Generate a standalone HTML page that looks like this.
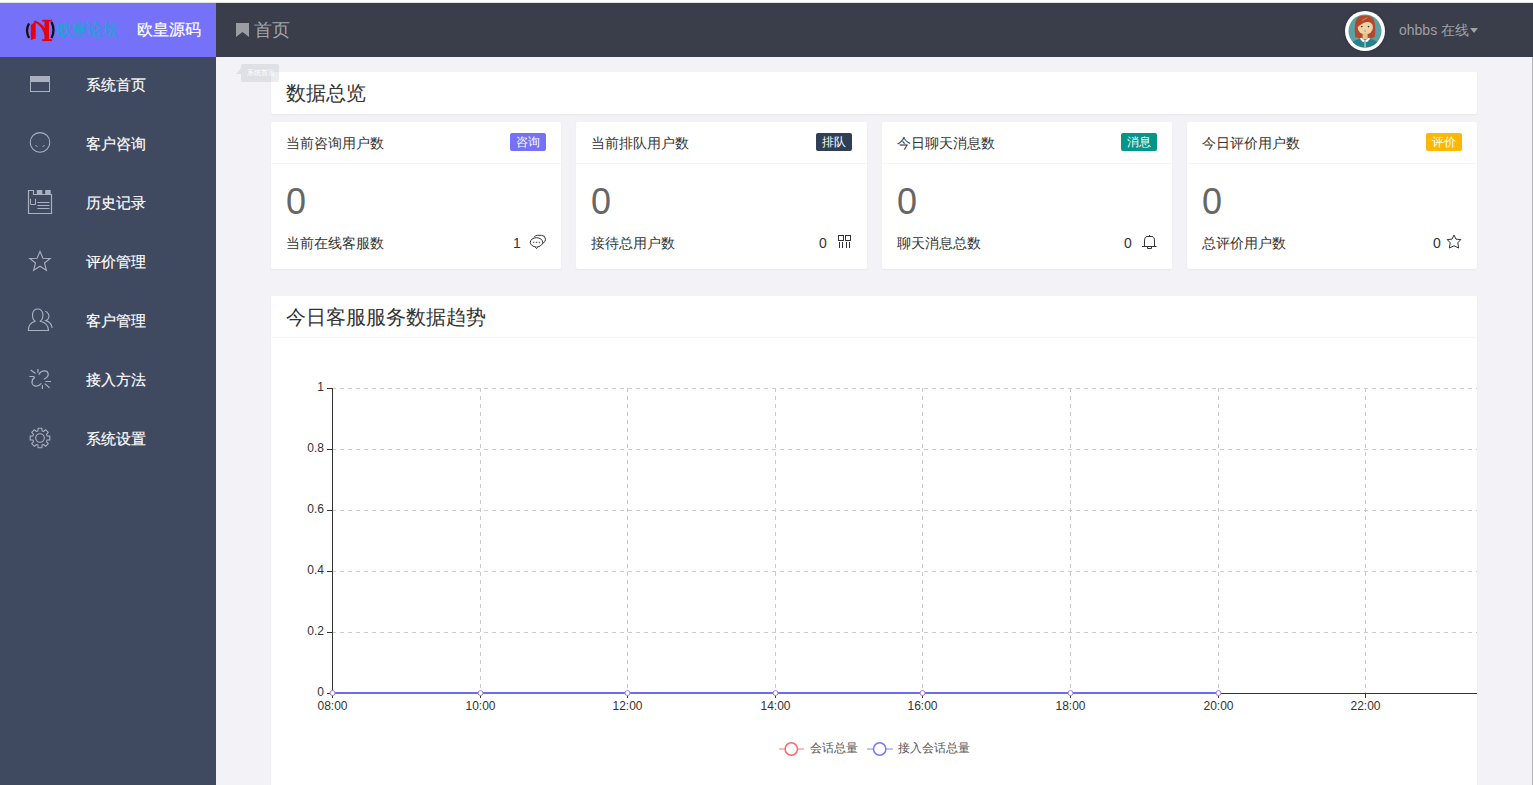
<!DOCTYPE html>
<html><head><meta charset="utf-8">
<style>
*{margin:0;padding:0;box-sizing:border-box}
html,body{width:1533px;height:785px;overflow:hidden;background:#f2f2f7;font-family:"Liberation Sans",sans-serif;color:#333}
.abs{position:absolute}
#topstrip{left:0;top:0;width:1533px;height:3px;background:#fff}
#logo{left:0;top:3px;width:216px;height:54px;background:#7571f9}
#hdr{left:216px;top:3px;width:1317px;height:54px;background:#3a3d4a}
#side{left:0;top:57px;width:216px;height:728px;background:#3f4960}
#rline{left:1532px;top:57px;width:1px;height:728px;background:#b4b4b8}
.logo-t{color:#fff;font-size:16px;line-height:16px;left:137px;top:22px;white-space:nowrap;-webkit-text-stroke:0.2px #fff}
.hd-t{color:#a3a6ab;font-size:18px;line-height:18px;left:254px;top:21px}
.nav{left:86px;color:#fff;font-size:15px;line-height:15px;white-space:nowrap;-webkit-text-stroke:0.15px #fff}
.card{background:#fff;border-radius:2px;box-shadow:0 1px 2px rgba(0,0,0,.05)}
.ch{font-size:14px;line-height:14px;white-space:nowrap}
.badge{height:18px;width:36px;line-height:18px;font-size:12px;color:#fff;text-align:center;border-radius:2px}
.big{font-size:36px;line-height:36px;color:#666}
.sub{font-size:14px;line-height:14px;color:#333;white-space:nowrap}
.sep{height:1px;background:#f6f6f6}
.ic{stroke:#a9b1c0;fill:none}
</style></head><body>
<div id="topstrip" class="abs"></div><div class="abs" style="left:0;top:2px;width:1533px;height:1px;background:#e2e1da"></div>
<div id="logo" class="abs"></div>
<div id="hdr" class="abs"></div>
<div id="side" class="abs"></div>
<div id="rline" class="abs"></div>

<!-- logo -->
<svg class="abs" style="left:24px;top:16px" width="34" height="30" viewBox="0 0 34 30">
 <path d="M5 7.5 Q1 14.5 5 22" stroke="#111" stroke-width="2.3" fill="none"/>
 <path d="M27.5 6 Q31.5 14 27.5 22" stroke="#111" stroke-width="2.3" fill="none"/>
 <path d="M6.8 9 L11.7 5.5 L11.7 22.5 L6.8 24 Z" fill="#e60012"/>
 <path d="M9.5 6 Q17.5 8.5 21 20 L21 12.5 Q17 6.5 11 4.6 Z" fill="#e60012"/>
 <rect x="20.5" y="4" width="4.5" height="21" fill="#e60012"/>
 <rect x="18.2" y="3.8" width="9.8" height="1.8" fill="#e60012"/>
 <rect x="18.2" y="23.2" width="9.8" height="1.9" fill="#e60012"/>
</svg>
<div class="abs" style="left:57px;top:22px;font-size:16px;line-height:16px;color:#2f9bdc;font-weight:bold;white-space:nowrap;transform:scaleX(0.95);transform-origin:0 0">欧皇论坛</div>
<div class="abs logo-t">欧皇源码</div>

<!-- header -->
<svg class="abs" style="left:236px;top:23px" width="13" height="14" viewBox="0 0 13 14"><path d="M0 0H13V14L6.5 9L0 14Z" fill="#9a9ea3"/></svg>
<div class="abs hd-t">首页</div>

<!-- avatar -->
<div class="abs" style="left:1345px;top:11px;width:40px;height:40px;border-radius:50%;background:#fff;box-shadow:0 0 4px rgba(0,0,0,.15)"></div>
<svg class="abs" style="left:1348px;top:14px" width="34" height="34" viewBox="0 0 34 34">
 <defs><clipPath id="cc"><circle cx="17" cy="17" r="16.5"/></clipPath></defs>
 <g clip-path="url(#cc)">
  <rect width="34" height="34" fill="#5ba0a6"/>
  <path d="M7.3 23 C6.3 15 6.5 7 9.5 4 C12.5 0.8 21.5 0.8 24.5 4 C27.5 7 27.7 15 26.8 23 Q22 25 17 24.5 Q12 25 7.3 23 Z" fill="#b5472a"/>
  <ellipse cx="17.3" cy="13.5" rx="7.6" ry="7" fill="#eed3a3"/>
  <path d="M8.8 14 C8.5 7 12.5 3 18 3.2 C22.5 3.4 25.5 6 26 10.5 C24 8.5 21 7.6 18.5 8 C15 8.8 11.5 11 8.8 14 Z" fill="#b5472a"/>
  <path d="M14 6.5 L19.5 3.5" stroke="#e9b9a0" stroke-width="0.6"/>
  <circle cx="13.8" cy="12.6" r="0.8" fill="#3a3030"/>
  <circle cx="20.5" cy="12.6" r="0.8" fill="#3a3030"/>
  <circle cx="17.1" cy="17" r="0.9" fill="#e39486"/>
  <rect x="14.6" y="19" width="5" height="6" fill="#e3c596"/>
  <path d="M1 34 C2 28.5 7 25.5 13.5 24.5 L17 27 L20.5 24.5 C27 25.5 32 28.5 33 34 Z" fill="#2a8289"/>
  <path d="M13 23.5 L17 26.8 L15.2 28.3 L12 25 Z M21 23.5 L17 26.8 L18.8 28.3 L22 25 Z" fill="#fff"/>
  <rect x="16.5" y="27" width="1.1" height="8" fill="#bfe4e6"/>
 </g>
</svg>
<div class="abs" style="left:1399px;top:22px;font-size:14px;line-height:16px;color:#9fa1a6;white-space:nowrap">ohbbs 在线</div>
<svg class="abs" style="left:1470px;top:28px" width="8" height="5" viewBox="0 0 8 5"><path d="M0 0H8L4 5Z" fill="#9fa1a6"/></svg>

<!-- sidebar -->
<svg class="abs" style="left:30px;top:76px" width="20" height="16" viewBox="0 0 20 16"><rect x="0.5" y="0.5" width="19" height="15" stroke="#a9b1c0" fill="none"/><rect x="0" y="0" width="20" height="6" fill="#a9b1c0"/></svg>
<div class="abs nav" style="top:77px">系统首页</div>
<svg class="abs" style="left:29px;top:131px" width="22" height="22" viewBox="0 0 22 22"><circle cx="11" cy="11.4" r="9.8" class="ic" stroke-width="1.1"/><path d="M6.5 14.5 L8.5 15.5 M13.5 15.5 L15.5 14.5" class="ic" stroke-width="1"/></svg>
<div class="abs nav" style="top:136px">客户咨询</div>
<svg class="abs" style="left:27px;top:189px" width="26" height="26" viewBox="0 0 26 26"><path d="M1.5 1.5 H6.5 V5.5 H24.5 V24.5 H1.5 Z" class="ic" stroke-width="1.2"/><rect x="9.8" y="1" width="5.5" height="4.5" fill="#a9b1c0"/><rect x="18.2" y="1" width="5.5" height="4.5" fill="#a9b1c0"/><path d="M3.5 9.8 V15.5 H8.5 V9.8" class="ic"/><path d="M10.4 13.5 H22.5 M10.4 16.5 H22.5 M10.4 19.5 H22.5" class="ic"/></svg>
<div class="abs nav" style="top:195px">历史记录</div>
<svg class="abs" style="left:28px;top:250px" width="24" height="23" viewBox="0 0 24 23"><path d="M12 1.5 L14.9 8.2 L22.2 8.4 L16.5 13 L18.4 20.3 L12 16.2 L5.6 20.3 L7.5 13 L1.8 8.4 L9.1 8.2 Z" class="ic" stroke-width="1.1" stroke-linejoin="miter"/></svg>
<div class="abs nav" style="top:254px">评价管理</div>
<svg class="abs" style="left:27px;top:307px" width="28" height="26" viewBox="0 0 28 26"><path d="M8.3 14.2 C4.2 11.5 4.3 2 10.7 2 C17.1 2 17.2 11.5 13.1 14.2 C18 15.3 21.5 18.5 21.5 23.5 H1.3 C1.3 18.5 4 15.3 8.3 14.2 Z" class="ic" stroke-width="1.15" stroke-linejoin="round"/><path d="M18.2 4.3 C21 5 22.3 8 21.9 10 C21.5 12 20.5 13 18.9 13.6 C22.5 14.8 24.8 17.5 25.1 21" class="ic" stroke-width="1.15"/></svg>
<div class="abs nav" style="top:313px">客户管理</div>
<svg class="abs" style="left:28px;top:368px" width="24" height="23" viewBox="0 0 24 23"><path d="M10.7 6.6 C12.5 3.5 14.5 2.9 16.3 2.9 C18.5 2.9 20.2 4.5 20.2 6.6 C20.2 8.6 18 10.3 15.9 11.3" class="ic" stroke-width="1.25"/><path d="M6.8 9.4 C5 10.5 4 12.5 4 14.3 C4 16.5 6 18.2 8.1 18.2 C10.5 18.2 12 17 13.3 15.4" class="ic" stroke-width="1.25"/><path d="M2.7 2 L7.5 5.6 M9.9 1 V4.8 M1.3 8.5 H6.4 M17.6 13.5 H23 M16.8 15.6 L21.5 19.7 M14.4 17.3 V21" class="ic" stroke-width="1.2"/></svg>
<div class="abs nav" style="top:372px">接入方法</div>
<svg class="abs" style="left:28px;top:426px" width="24" height="24" viewBox="0 0 24 24"><path d="M9.96 4.89L10.09 2.18L13.91 2.18L14.04 4.89L15.59 5.53L17.59 3.71L20.29 6.41L18.47 8.41L19.11 9.96L21.82 10.09L21.82 13.91L19.11 14.04L18.47 15.59L20.29 17.59L17.59 20.29L15.59 18.47L14.04 19.11L13.91 21.82L10.09 21.82L9.96 19.11L8.41 18.47L6.41 20.29L3.71 17.59L5.53 15.59L4.89 14.04L2.18 13.91L2.18 10.09L4.89 9.96L5.53 8.41L3.71 6.41L6.41 3.71L8.41 5.53Z" class="ic" stroke-width="1.1" stroke-linejoin="round"/><circle cx="12" cy="12" r="4.3" class="ic" stroke-width="1.1"/></svg>
<div class="abs nav" style="top:431px">系统设置</div>

<div class="abs card" style="left:271px;top:72px;width:1206px;height:42px"></div>
<div class="abs" style="left:286px;top:83px;font-size:20px;line-height:20px;color:#333;white-space:nowrap">数据总览</div>
<div class="abs card" style="left:271px;top:122px;width:290px;height:147px"></div>
<div class="abs ch" style="left:286px;top:136px">当前咨询用户数</div>
<div class="abs badge" style="left:510px;top:133px;background:#7571f9">咨询</div>
<div class="abs sep" style="left:271px;top:163px;width:290px"></div>
<div class="abs big" style="left:286px;top:184px">0</div>
<div class="abs sub" style="left:286px;top:236px">当前在线客服数</div>
<div class="abs sub" style="left:513px;top:236px">1</div>
<svg class="abs" style="left:529px;top:234px" width="17" height="16" viewBox="0 0 17 16"><path d="M5 3.3 Q6.2 1.3 8.5 1.3 H12.5 Q16.5 1.3 16.5 5.3 Q16.5 7.8 14 9.2" stroke="#333" fill="none"/><ellipse cx="7.5" cy="8.3" rx="6.2" ry="4.6" stroke="#333" fill="#fff"/><path d="M6 12.6 L7.5 14.6 L9 12.6" stroke="#333" fill="#fff"/><path d="M4 8.3H5.3M6.9 8.3H8.2M9.8 8.3H11.1" stroke="#333" stroke-width="1.1"/></svg>
<div class="abs card" style="left:576px;top:122px;width:291px;height:147px"></div>
<div class="abs ch" style="left:591px;top:136px">当前排队用户数</div>
<div class="abs badge" style="left:816px;top:133px;background:#2f4056">排队</div>
<div class="abs sep" style="left:576px;top:163px;width:291px"></div>
<div class="abs big" style="left:591px;top:184px">0</div>
<div class="abs sub" style="left:591px;top:236px">接待总用户数</div>
<div class="abs sub" style="left:819px;top:236px">0</div>
<svg class="abs" style="left:838px;top:235px" width="14" height="14" viewBox="0 0 14 14"><rect x="0.5" y="0.5" width="5" height="5" stroke="#333" fill="none"/><rect x="7.5" y="0.5" width="5" height="5" stroke="#333" fill="none"/><path d="M1.5 7V13M4.5 7V13M8.5 7V13M11.5 7V13" stroke="#333"/></svg>
<div class="abs card" style="left:882px;top:122px;width:290px;height:147px"></div>
<div class="abs ch" style="left:897px;top:136px">今日聊天消息数</div>
<div class="abs badge" style="left:1121px;top:133px;background:#009688">消息</div>
<div class="abs sep" style="left:882px;top:163px;width:290px"></div>
<div class="abs big" style="left:897px;top:184px">0</div>
<div class="abs sub" style="left:897px;top:236px">聊天消息总数</div>
<div class="abs sub" style="left:1124px;top:236px">0</div>
<svg class="abs" style="left:1142px;top:235px" width="15" height="15" viewBox="0 0 15 15"><path d="M2.5 11.5 V6 C2.5 3.2 3.5 1.5 5 1.5 H10 C11.5 1.5 12.5 3.2 12.5 6 V11.5" stroke="#333" fill="none"/><path d="M0 11.5H14.5" stroke="#333"/><path d="M5.5 12 V13.5 H9.5 V12" stroke="#333" fill="none"/><path d="M7.5 0V1.5" stroke="#333"/></svg>
<div class="abs card" style="left:1187px;top:122px;width:290px;height:147px"></div>
<div class="abs ch" style="left:1202px;top:136px">今日评价用户数</div>
<div class="abs badge" style="left:1426px;top:133px;background:#ffb800">评价</div>
<div class="abs sep" style="left:1187px;top:163px;width:290px"></div>
<div class="abs big" style="left:1202px;top:184px">0</div>
<div class="abs sub" style="left:1202px;top:236px">总评价用户数</div>
<div class="abs sub" style="left:1433px;top:236px">0</div>
<svg class="abs" style="left:1446px;top:234px" width="16" height="15" viewBox="0 0 16 15"><path d="M8 1 L10 5.2 L14.8 5.5 L11.8 8.8 L12.6 14 L8 11.8 L3.4 14 L4.2 8.8 L1.2 5.5 L6 5.2 Z" stroke="#333" fill="none" stroke-linejoin="round"/></svg>
<div class="abs card" style="left:271px;top:296px;width:1206px;height:500px"></div>
<div class="abs" style="left:286px;top:307px;font-size:20px;line-height:20px;color:#333;white-space:nowrap">今日客服服务数据趋势</div>
<div class="abs sep" style="left:271px;top:337px;width:1206px"></div>
<svg class="abs" style="left:271px;top:338px" width="1206" height="447" viewBox="0 0 1206 447">
<line x1="61" y1="294.5" x2="1206" y2="294.5" stroke="#ccc" stroke-dasharray="4 4"/>
<line x1="61" y1="233.5" x2="1206" y2="233.5" stroke="#ccc" stroke-dasharray="4 4"/>
<line x1="61" y1="172.5" x2="1206" y2="172.5" stroke="#ccc" stroke-dasharray="4 4"/>
<line x1="61" y1="111.5" x2="1206" y2="111.5" stroke="#ccc" stroke-dasharray="4 4"/>
<line x1="61" y1="50.5" x2="1206" y2="50.5" stroke="#ccc" stroke-dasharray="4 4"/>
<line x1="209.5" y1="50" x2="209.5" y2="355" stroke="#ccc" stroke-dasharray="4 4"/>
<line x1="356.5" y1="50" x2="356.5" y2="355" stroke="#ccc" stroke-dasharray="4 4"/>
<line x1="504.5" y1="50" x2="504.5" y2="355" stroke="#ccc" stroke-dasharray="4 4"/>
<line x1="651.5" y1="50" x2="651.5" y2="355" stroke="#ccc" stroke-dasharray="4 4"/>
<line x1="799.5" y1="50" x2="799.5" y2="355" stroke="#ccc" stroke-dasharray="4 4"/>
<line x1="947.5" y1="50" x2="947.5" y2="355" stroke="#ccc" stroke-dasharray="4 4"/>
<line x1="1094.5" y1="50" x2="1094.5" y2="355" stroke="#ccc" stroke-dasharray="4 4"/>
<line x1="61.5" y1="50" x2="61.5" y2="360" stroke="#333"/>
<line x1="61" y1="355.5" x2="1206" y2="355.5" stroke="#333"/>
<line x1="56" y1="355.5" x2="61" y2="355.5" stroke="#333"/>
<text x="53" y="357.5" font-size="12" text-anchor="end" fill="#333" font-family="Liberation Sans">0</text>
<line x1="56" y1="294.5" x2="61" y2="294.5" stroke="#333"/>
<text x="53" y="296.5" font-size="12" text-anchor="end" fill="#333" font-family="Liberation Sans">0.2</text>
<line x1="56" y1="233.5" x2="61" y2="233.5" stroke="#333"/>
<text x="53" y="235.5" font-size="12" text-anchor="end" fill="#333" font-family="Liberation Sans">0.4</text>
<line x1="56" y1="172.5" x2="61" y2="172.5" stroke="#333"/>
<text x="53" y="174.5" font-size="12" text-anchor="end" fill="#333" font-family="Liberation Sans">0.6</text>
<line x1="56" y1="111.5" x2="61" y2="111.5" stroke="#333"/>
<text x="53" y="113.5" font-size="12" text-anchor="end" fill="#333" font-family="Liberation Sans">0.8</text>
<line x1="56" y1="50.5" x2="61" y2="50.5" stroke="#333"/>
<text x="53" y="52.5" font-size="12" text-anchor="end" fill="#333" font-family="Liberation Sans">1</text>
<line x1="61.5" y1="355" x2="61.5" y2="360" stroke="#333"/>
<text x="61.5" y="372" font-size="12" text-anchor="middle" fill="#333" font-family="Liberation Sans">08:00</text>
<line x1="209.5" y1="355" x2="209.5" y2="360" stroke="#333"/>
<text x="209.5" y="372" font-size="12" text-anchor="middle" fill="#333" font-family="Liberation Sans">10:00</text>
<line x1="356.5" y1="355" x2="356.5" y2="360" stroke="#333"/>
<text x="356.5" y="372" font-size="12" text-anchor="middle" fill="#333" font-family="Liberation Sans">12:00</text>
<line x1="504.5" y1="355" x2="504.5" y2="360" stroke="#333"/>
<text x="504.5" y="372" font-size="12" text-anchor="middle" fill="#333" font-family="Liberation Sans">14:00</text>
<line x1="651.5" y1="355" x2="651.5" y2="360" stroke="#333"/>
<text x="651.5" y="372" font-size="12" text-anchor="middle" fill="#333" font-family="Liberation Sans">16:00</text>
<line x1="799.5" y1="355" x2="799.5" y2="360" stroke="#333"/>
<text x="799.5" y="372" font-size="12" text-anchor="middle" fill="#333" font-family="Liberation Sans">18:00</text>
<line x1="947.5" y1="355" x2="947.5" y2="360" stroke="#333"/>
<text x="947.5" y="372" font-size="12" text-anchor="middle" fill="#333" font-family="Liberation Sans">20:00</text>
<line x1="1094.5" y1="355" x2="1094.5" y2="360" stroke="#333"/>
<text x="1094.5" y="372" font-size="12" text-anchor="middle" fill="#333" font-family="Liberation Sans">22:00</text>
<line x1="61" y1="355" x2="947" y2="355" stroke="#6b6bf6" stroke-width="2"/>
<circle cx="61.5" cy="355" r="2.5" fill="#fff" stroke="#9b7df0" stroke-width="1"/>
<circle cx="209.5" cy="355" r="2.5" fill="#fff" stroke="#9b7df0" stroke-width="1"/>
<circle cx="356.5" cy="355" r="2.5" fill="#fff" stroke="#9b7df0" stroke-width="1"/>
<circle cx="504.5" cy="355" r="2.5" fill="#fff" stroke="#9b7df0" stroke-width="1"/>
<circle cx="651.5" cy="355" r="2.5" fill="#fff" stroke="#9b7df0" stroke-width="1"/>
<circle cx="799.5" cy="355" r="2.5" fill="#fff" stroke="#9b7df0" stroke-width="1"/>
<circle cx="947.5" cy="355" r="2.5" fill="#fff" stroke="#9b7df0" stroke-width="1"/>
<line x1="508" y1="411" x2="533" y2="411" stroke="#f77"/>
<circle cx="520.3" cy="411" r="6.2" fill="#fff" stroke="#f66" stroke-width="1.5"/>
<text x="539" y="414" font-size="12" fill="#555">会话总量</text>
<line x1="596" y1="411" x2="622" y2="411" stroke="#88f"/>
<circle cx="608.7" cy="411" r="6.2" fill="#fff" stroke="#77f" stroke-width="1.5"/>
<text x="627" y="414" font-size="12" fill="#555">接入会话总量</text>
</svg>
<!-- tooltip -->
<div class="abs" style="left:241px;top:64px;width:38px;height:18px;background:rgba(20,40,70,0.09);border-radius:2px"></div>
<svg class="abs" style="left:236px;top:68px" width="5" height="6" viewBox="0 0 5 6"><path d="M5 0V6H0Z" fill="rgba(20,40,70,0.09)"/></svg>
<div class="abs" style="left:247px;top:69px;font-size:7px;line-height:8px;color:#fff;white-space:nowrap">系统首页</div>


</body></html>
